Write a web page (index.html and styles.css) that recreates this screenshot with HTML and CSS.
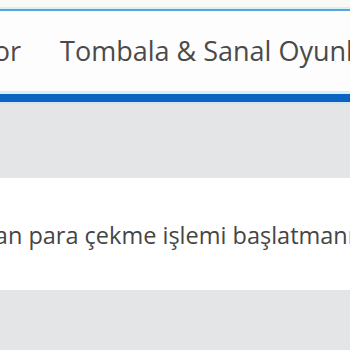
FILE: index.html
```html
<!DOCTYPE html>
<html lang="tr">
<head>
<meta charset="utf-8">
<link rel="stylesheet" href="styles.css">
</head>
<body>
<div class="topstrip"></div>
<nav class="nav">
  <ul class="nav-list">
    <li class="nav-item">Sor</li>
    <li class="nav-item">Tombala &amp; Sanal Oyunlar</li>
  </ul>
</nav>
<div class="nav-underline"></div>
<div class="band"></div>
<section class="content">
  <p class="msg">Hesabınızdan para çekme işlemi başlatmanız için</p>
</section>
<div class="band band-bottom"></div>
</body>
</html>
```
FILE: styles.css
```css
html, body {
  margin: 0;
  padding: 0;
  width: 350px;
  height: 350px;
  overflow: hidden;
  background: #ffffff;
  font-family: "Open Sans", "Noto Sans", sans-serif;
  color: #444;
}
.topstrip {
  height: 7px;
  background: #fbf9f6;
  border-bottom: 2px solid #d3f1fb;
}
.nav {
  border-top: 2px solid #5aa3d8;
  height: 80px;
  background: #fdfdfd;
  border-bottom: 3px solid #d6eef9;
  overflow: hidden;
}
.nav-list {
  list-style: none;
  margin: 0;
  padding: 0;
  display: flex;
  gap: 39px;
  margin-left: -21px;
  white-space: nowrap;
}
.nav-item {
  font-size: 27px;
  line-height: 80px;
  color: #4a4a4a;
}
.nav-underline {
  height: 8px;
  background: #0a62c2;
  border-bottom: 2px solid #d4e4ef;
}
.band {
  height: 72px;
  background: #e4e5e7;
  border-top: 2px solid #e1e4e8;
}
.content {
  height: 112px;
  background: #fff;
  overflow: hidden;
}
.msg {
  margin: 0;
  padding-top: 42px;
  font-size: 23.5px;
  line-height: 30px;
  white-space: nowrap;
  margin-left: -126px;
  color: #454545;
}
.band-bottom {
  height: 70px;
}
```
